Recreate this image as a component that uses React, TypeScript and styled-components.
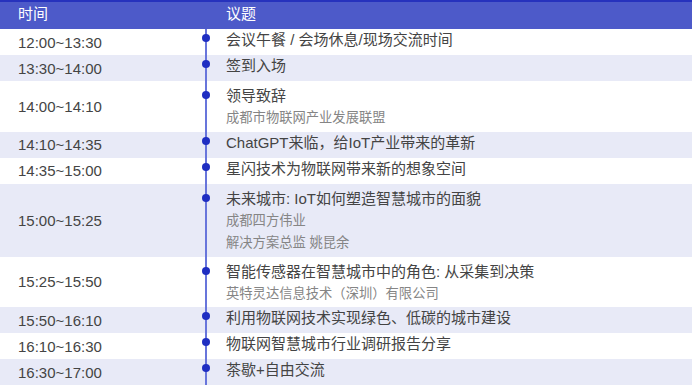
import styled, { createGlobalStyle } from 'styled-components';

type Session = {
  time: string;
  title: string;
  notes?: string[];
};

const sessions: Session[] = [
  { time: '12:00~13:30', title: '会议午餐 / 会场休息/现场交流时间' },
  { time: '13:30~14:00', title: '签到入场' },
  { time: '14:00~14:10', title: '领导致辞', notes: ['成都市物联网产业发展联盟'] },
  { time: '14:10~14:35', title: 'ChatGPT来临，给IoT产业带来的革新' },
  { time: '14:35~15:00', title: '星闪技术为物联网带来新的想象空间' },
  {
    time: '15:00~15:25',
    title: '未来城市: IoT如何塑造智慧城市的面貌',
    notes: ['成都四方伟业', '解决方案总监 姚昆余'],
  },
  {
    time: '15:25~15:50',
    title: '智能传感器在智慧城市中的角色: 从采集到决策',
    notes: ['英特灵达信息技术（深圳）有限公司'],
  },
  { time: '15:50~16:10', title: '利用物联网技术实现绿色、低碳的城市建设' },
  { time: '16:10~16:30', title: '物联网智慧城市行业调研报告分享' },
  { time: '16:30~17:00', title: '茶歇+自由交流' },
];

function App() {
  return (
    <>
      <GlobalStyle />
      <Schedule>
        <Header>
          <HeadCell>时间</HeadCell>
          <span />
          <HeadCell $indent>议题</HeadCell>
        </Header>
        {sessions.map((s, i) => (
          <Row key={s.time} $shaded={i % 2 === 1}>
            <TimeCell>{s.time}</TimeCell>
            <Track>
              <Dot $multi={!!s.notes} />
            </Track>
            <Topic $multi={!!s.notes}>
              <Title>{s.title}</Title>
              {s.notes?.map((n) => (
                <Note key={n}>{n}</Note>
              ))}
            </Topic>
          </Row>
        ))}
      </Schedule>
    </>
  );
}

export default App;

const GlobalStyle = createGlobalStyle`
  html, body {
    margin: 0;
    padding: 0;
    background: #ffffff;
  }
  body {
    font-family: "Liberation Sans", "Noto Sans CJK SC", sans-serif;
    color: #444444;
  }
`;

const Schedule = styled.div`
  width: 692px;
  display: flex;
  flex-direction: column;
`;

const Header = styled.div`
  display: grid;
  grid-template-columns: 196px 20px 1fr;
  height: 27px;
  align-items: center;
  background: #4d5ac9;
  border-top: 2px solid #2632bd;
`;

const HeadCell = styled.span<{ $indent?: boolean }>`
  padding-left: ${(p) => (p.$indent ? '10px' : '18px')};
  color: #ffffff;
  font-size: 15px;
  line-height: 22px;
  padding-bottom: 3px;
`;

const Row = styled.div<{ $shaded: boolean }>`
  display: grid;
  grid-template-columns: 196px 20px 1fr;
  min-height: 26px;
  background: ${(p) => (p.$shaded ? '#e8eaf7' : '#ffffff')};
`;

const TimeCell = styled.div`
  display: flex;
  align-items: center;
  padding-left: 18px;
  font-size: 15px;
  color: #444444;
`;

const Track = styled.div`
  position: relative;
  &::before {
    content: '';
    position: absolute;
    left: 9px;
    top: 0;
    bottom: 0;
    width: 2px;
    background: #6875db;
  }
`;

const Dot = styled.span<{ $multi: boolean }>`
  position: absolute;
  left: 6px;
  top: ${(p) => (p.$multi ? '10px' : '5px')};
  width: 8px;
  height: 8px;
  border-radius: 50%;
  background: #1f2ec2;
`;

const Topic = styled.div<{ $multi: boolean }>`
  padding: ${(p) => (p.$multi ? '4px 0 2px 10px' : '0 0 4px 10px')};
  display: flex;
  flex-direction: column;
`;

const Title = styled.div`
  font-size: 15px;
  line-height: 22px;
  color: #444444;
`;

const Note = styled.div`
  font-size: 13.3px;
  line-height: 22.5px;
  color: #858585;
`;
